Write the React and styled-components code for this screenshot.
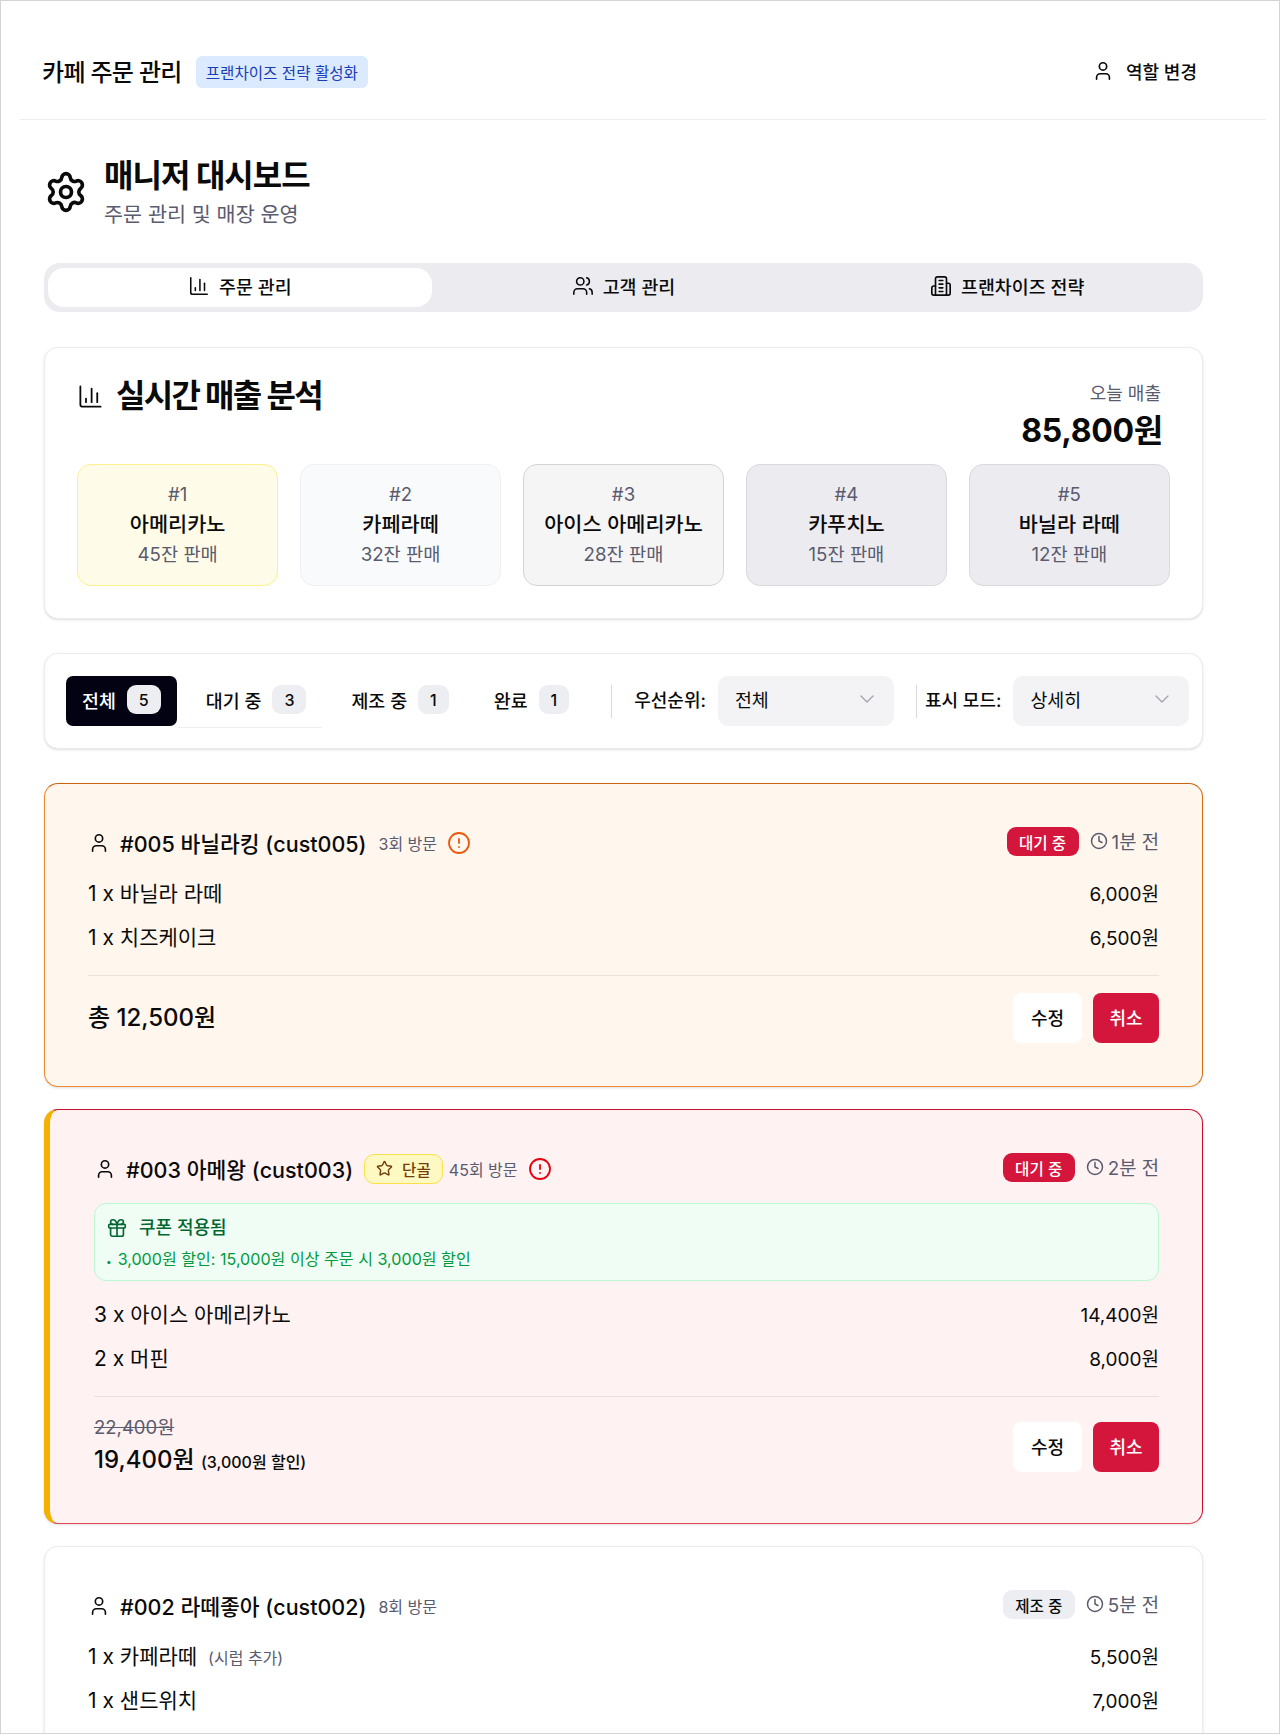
import styled, { createGlobalStyle } from 'styled-components';
import {
  AlertCircle,
  BarChart3,
  ChevronDown,
  Clock,
  Gift,
  Settings,
  Star,
  User,
  Users,
} from 'lucide-react';

const GlobalStyle = createGlobalStyle`
  * {
    box-sizing: border-box;
  }
  html, body {
    margin: 0;
    padding: 0;
    background: #fff;
  }
  body {
    font-family: Inter, "Noto Sans CJK KR", sans-serif;
    color: #0a0a0a;
  }
`;

const RANKS = [
  { rank: 1, name: '아메리카노', sold: '45잔 판매', bg: '#fefce8', line: '#fef08a' },
  { rank: 2, name: '카페라떼', sold: '32잔 판매', bg: '#f9fafb', line: '#eff0f3' },
  { rank: 3, name: '아이스 아메리카노', sold: '28잔 판매', bg: '#f5f5f5', line: '#d4d4d4' },
  { rank: 4, name: '카푸치노', sold: '15잔 판매', bg: '#ececf0', line: '#d9d9de' },
  { rank: 5, name: '바닐라 라떼', sold: '12잔 판매', bg: '#ececf0', line: '#d9d9de' },
];

const FILTERS = [
  { label: '전체', count: 5, active: true },
  { label: '대기 중', count: 3, underlined: true },
  { label: '제조 중', count: 1 },
  { label: '완료', count: 1 },
];

// tall tower with side wings, the packaged Building2 is drawn differently
function TowerIcon() {
  return (
    <svg
      width="22"
      height="22"
      viewBox="0 0 24 24"
      fill="none"
      stroke="currentColor"
      strokeWidth="1.8"
      strokeLinecap="round"
      strokeLinejoin="round"
    >
      <path d="M6 22V4a2 2 0 0 1 2-2h8a2 2 0 0 1 2 2v18Z" />
      <path d="M6 12H4a2 2 0 0 0-2 2v6a2 2 0 0 0 2 2h2" />
      <path d="M18 9h2a2 2 0 0 1 2 2v9a2 2 0 0 1-2 2h-2" />
      <path d="M10 6h4" />
      <path d="M10 10h4" />
      <path d="M10 14h4" />
      <path d="M10 18h4" />
    </svg>
  );
}

function OrderHead({ title, visits, alert, regular, status, waiting, ago }) {
  return (
    <OrderHeader>
      <HeadLeft>
        <User size={22} strokeWidth={1.8} />
        <OrderTitle>{title}</OrderTitle>
        {regular && (
          <RegularBadge>
            <Star size={17} strokeWidth={2} />
            단골
          </RegularBadge>
        )}
        <Visits $tight={regular}>{visits}</Visits>
        {alert && (
          <AlertMark $color={alert}>
            <AlertCircle size={24} strokeWidth={1.8} />
          </AlertMark>
        )}
      </HeadLeft>
      <HeadRight>
        <StatusBadge $waiting={waiting}>{status}</StatusBadge>
        <Ago>
          <Clock size={18} strokeWidth={2} />
          {ago}
        </Ago>
      </HeadRight>
    </OrderHeader>
  );
}

function ItemRow({ name, option, price }) {
  return (
    <Item>
      <ItemName>
        {name}
        {option && <ItemOption>{option}</ItemOption>}
      </ItemName>
      <ItemPrice>{price}</ItemPrice>
    </Item>
  );
}

function Actions() {
  return (
    <ActionRow>
      <EditButton>수정</EditButton>
      <CancelButton>취소</CancelButton>
    </ActionRow>
  );
}

export default function App() {
  return (
    <Frame>
      <GlobalStyle />
      <TopBar>
        <Brand>
          <BrandName>카페 주문 관리</BrandName>
          <BrandBadge>프랜차이즈 전략 활성화</BrandBadge>
        </Brand>
        <RoleButton>
          <User size={22} strokeWidth={1.8} />
          역할 변경
        </RoleButton>
      </TopBar>

      <Main>
        <PageHead>
          <GearIcon size={44} strokeWidth={2} />
          <div>
            <PageTitle>매니저 대시보드</PageTitle>
            <PageSub>주문 관리 및 매장 운영</PageSub>
          </div>
        </PageHead>

        <MainTabs>
          <MainTab $active>
            <BarChart3 size={22} strokeWidth={1.7} />
            주문 관리
          </MainTab>
          <MainTab>
            <Users size={22} strokeWidth={1.7} />
            고객 관리
          </MainTab>
          <MainTab>
            <TowerIcon />
            프랜차이즈 전략
          </MainTab>
        </MainTabs>

        <SalesCard>
          <SalesHead>
            <SalesTitle>
              <BarChart3 size={27} strokeWidth={1.6} />
              <h2>실시간 매출 분석</h2>
            </SalesTitle>
            <SalesTotal>
              <span>오늘 매출</span>
              <strong>85,800원</strong>
            </SalesTotal>
          </SalesHead>
          <RankGrid>
            {RANKS.map((r) => (
              <RankCard key={r.rank} $bg={r.bg} $line={r.line}>
                <RankNo>#{r.rank}</RankNo>
                <RankName>{r.name}</RankName>
                <RankSold>{r.sold}</RankSold>
              </RankCard>
            ))}
          </RankGrid>
        </SalesCard>

        <FilterCard>
          <FilterTabs>
            {FILTERS.map((f) => (
              <FilterTab key={f.label} $active={f.active} $underlined={f.underlined}>
                {f.label}
                <Count>{f.count}</Count>
              </FilterTab>
            ))}
          </FilterTabs>
          <Divider $left={26} />
          <FilterLabel $left={22}>우선순위:</FilterLabel>
          <SelectBox>
            전체
            <ChevronDown size={24} strokeWidth={1.4} />
          </SelectBox>
          <Divider $left={22} />
          <FilterLabel $left={8}>표시 모드:</FilterLabel>
          <SelectBox>
            상세히
            <ChevronDown size={24} strokeWidth={1.4} />
          </SelectBox>
        </FilterCard>

        <OrderList>
          <OrderCard $variant="orange">
            <OrderHead
              title="#005 바닐라킹 (cust005)"
              visits="3회 방문"
              alert="#ea580c"
              status="대기 중"
              waiting
              ago="1분 전"
            />
            <Items>
              <ItemRow name="1 x 바닐라 라떼" price="6,000원" />
              <ItemRow name="1 x 치즈케이크" price="6,500원" />
            </Items>
            <OrderFoot>
              <TotalPrice>총 12,500원</TotalPrice>
              <Actions />
            </OrderFoot>
          </OrderCard>

          <OrderCard $variant="red">
            <OrderHead
              title="#003 아메왕 (cust003)"
              visits="45회 방문"
              alert="#e7000b"
              regular
              status="대기 중"
              waiting
              ago="2분 전"
            />
            <Coupon>
              <CouponTitle>
                <Gift size={22} strokeWidth={1.8} />
                쿠폰 적용됨
              </CouponTitle>
              <CouponLine>
                <Dot>•</Dot>3,000원 할인: 15,000원 이상 주문 시 3,000원 할인
              </CouponLine>
            </Coupon>
            <Items $afterCoupon>
              <ItemRow name="3 x 아이스 아메리카노" price="14,400원" />
              <ItemRow name="2 x 머핀" price="8,000원" />
            </Items>
            <OrderFoot>
              <div>
                <OldPrice>22,400원</OldPrice>
                <DiscountPrice>
                  19,400원 <Saved>(3,000원 할인)</Saved>
                </DiscountPrice>
              </div>
              <Actions />
            </OrderFoot>
          </OrderCard>

          <OrderCard>
            <OrderHead
              title="#002 라떼좋아 (cust002)"
              visits="8회 방문"
              status="제조 중"
              ago="5분 전"
            />
            <Items>
              <ItemRow name="1 x 카페라떼" option="(시럽 추가)" price="5,500원" />
              <ItemRow name="1 x 샌드위치" price="7,000원" />
            </Items>
          </OrderCard>
        </OrderList>
      </Main>
    </Frame>
  );
}

const Frame = styled.div`
  width: 1280px;
  height: 1734px;
  overflow: hidden;
  border: 1px solid #d4d4d4;
`;

const TopBar = styled.header`
  display: flex;
  align-items: center;
  justify-content: space-between;
  height: 119px;
  margin: 0 13px 0 19px;
  padding: 24px 69px 0 22px;
  border-bottom: 1px solid #eeeeee;
`;

const Brand = styled.div`
  display: flex;
  align-items: center;
  gap: 14px;
`;

const BrandName = styled.h1`
  margin: 2px 0 0;
  font-size: 24px;
  font-weight: 500;
  letter-spacing: -0.7px;
  line-height: 32px;
`;

const BrandBadge = styled.span`
  display: flex;
  align-items: center;
  height: 32px;
  padding: 0 10px;
  border-radius: 6px;
  background: #dbeafe;
  color: #193cb8;
  font-size: 15.6px;
  font-weight: 400;
`;

const RoleButton = styled.div`
  display: flex;
  align-items: center;
  gap: 12px;
  padding-bottom: 2px;
  font-size: 18px;
  font-weight: 500;
`;

const Main = styled.main`
  display: flex;
  flex-direction: column;
  width: 1159px;
  margin-left: 43px;
`;

const PageHead = styled.div`
  display: flex;
  align-items: center;
  gap: 16px;
  height: 71px;
  margin-top: 38px;
`;

const GearIcon = styled(Settings)`
  margin-bottom: 4px;
`;

const PageTitle = styled.h2`
  margin: 0 0 7px;
  font-size: 32px;
  font-weight: 700;
  letter-spacing: -1px;
  line-height: 36px;
`;

const PageSub = styled.p`
  margin: 0;
  color: #5a5b6e;
  font-size: 20.7px;
  line-height: 28px;
`;

const MainTabs = styled.div`
  display: grid;
  grid-template-columns: repeat(3, 1fr);
  height: 49px;
  margin-top: 34px;
  padding: 5px 4px;
  border-radius: 16px;
  background: #ececf0;
`;

const MainTab = styled.div`
  display: flex;
  align-items: center;
  justify-content: center;
  gap: 9px;
  padding-bottom: 4px;
  border-radius: 16px;
  background: ${(p) => (p.$active ? '#fff' : 'transparent')};
  font-size: 18.4px;
  font-weight: 500;
`;

const Card = styled.section`
  border: 1px solid #ececec;
  border-radius: 14px;
  background: #fff;
  box-shadow: 0 1px 3px rgba(0, 0, 0, 0.1), 0 1px 2px -1px rgba(0, 0, 0, 0.1);
`;

const SalesCard = styled(Card)`
  height: 272px;
  margin-top: 35px;
  padding: 32px;
`;

const SalesHead = styled.div`
  display: flex;
  justify-content: space-between;
  height: 84px;
`;

const SalesTitle = styled.div`
  display: flex;
  align-items: center;
  gap: 12px;
  height: 32px;
  h2 {
    margin: 0;
    font-size: 32px;
    font-weight: 700;
    letter-spacing: -1.7px;
    line-height: 32px;
  }
`;

const SalesTotal = styled.div`
  display: flex;
  flex-direction: column;
  align-items: flex-end;
  padding-right: 7px;
  span {
    margin-right: 2px;
    color: #5a5b6e;
    font-size: 18px;
    line-height: 28px;
  }
  strong {
    margin-top: 3px;
    font-size: 32px;
    font-weight: 700;
    letter-spacing: -0.3px;
    line-height: 40px;
  }
`;

const RankGrid = styled.div`
  display: grid;
  grid-template-columns: repeat(5, 1fr);
  gap: 21.6px;
`;

const RankCard = styled.div`
  display: flex;
  flex-direction: column;
  align-items: center;
  height: 122px;
  padding-top: 15px;
  border: 1px solid ${(p) => p.$line};
  border-radius: 14px;
  background: ${(p) => p.$bg};
`;

const RankNo = styled.div`
  color: #5a5b6e;
  font-size: 18.6px;
  line-height: 28px;
`;

const RankName = styled.div`
  margin-top: 2px;
  font-size: 20.8px;
  font-weight: 500;
  line-height: 30px;
`;

const RankSold = styled.div`
  margin-top: 1px;
  color: #5a5b6e;
  font-size: 18.7px;
  line-height: 28px;
`;

const FilterCard = styled(Card)`
  display: flex;
  align-items: center;
  height: 96px;
  margin-top: 34px;
  padding-left: 21px;
`;

const FilterTabs = styled.div`
  display: flex;
  gap: 13px;
`;

const FilterTab = styled.div`
  position: relative;
  display: flex;
  align-items: center;
  gap: 11px;
  height: 50px;
  padding: 0 16px 3px;
  border-radius: 7px;
  background: ${(p) => (p.$active ? '#030213' : 'transparent')};
  color: ${(p) => (p.$active ? '#fff' : '#0a0a0a')};
  font-size: 18.4px;
  font-weight: 500;
  &::after {
    content: ${(p) => (p.$underlined ? '""' : 'none')};
    position: absolute;
    left: -13px;
    right: 0;
    bottom: -2px;
    height: 1px;
    background: #eeeeee;
  }
`;

const Count = styled.span`
  display: flex;
  align-items: center;
  justify-content: center;
  height: 29px;
  padding: 0 12px;
  border-radius: 9px;
  background: #eceef2;
  color: #0a0a0a;
  font-size: 16px;
  font-weight: 500;
`;

const Divider = styled.span`
  width: 1px;
  height: 33px;
  margin-left: ${(p) => p.$left}px;
  background: #d9d9d9;
`;

const FilterLabel = styled.span`
  margin: 0 12px 4px ${(p) => p.$left}px;
  font-size: 18px;
  font-weight: 500;
`;

const SelectBox = styled.div`
  display: flex;
  align-items: center;
  justify-content: space-between;
  width: 176px;
  height: 50px;
  padding: 0 15px 4px 17px;
  border-radius: 10px;
  background: #f3f3f5;
  font-size: 18.4px;
  svg {
    color: #a4a4ac;
  }
`;

const OrderList = styled.div`
  display: flex;
  flex-direction: column;
  gap: 22px;
  margin-top: 34px;
`;

const VARIANTS = {
  orange: `
    background: #fff6ed;
    border-color: #c9650f #d46d14 #ef8a32 #ef8a32;
  `,
  red: `
    background: #fef2f2;
    border-color: #c8102e #c8102e #e04a58 #f5b000;
    border-left-width: 6px;
    padding-left: 44px;
    padding-bottom: 44px;
  `,
};

const OrderCard = styled(Card)`
  padding: 43px;
  ${(p) => VARIANTS[p.$variant] || ''}
`;

const OrderHeader = styled.div`
  display: flex;
  align-items: center;
  justify-content: space-between;
  height: 29px;
`;

const HeadLeft = styled.div`
  display: flex;
  align-items: center;
  padding-top: 2px;
`;

const OrderTitle = styled.span`
  margin-left: 10px;
  font-size: 21.5px;
  font-weight: 500;
`;

const RegularBadge = styled.span`
  display: flex;
  align-items: center;
  gap: 9px;
  height: 30px;
  margin-left: 11px;
  padding: 0 11px;
  border: 1px solid #fde047;
  border-radius: 10px;
  background: #fef9c3;
  color: #733e0a;
  font-size: 15.6px;
  font-weight: 500;
`;

const Visits = styled.span`
  margin-left: ${(p) => (p.$tight ? 6 : 12)}px;
  color: #5a5b6e;
  font-size: 16px;
`;

const AlertMark = styled.span`
  display: flex;
  margin-left: 10px;
  color: ${(p) => p.$color};
`;

const HeadRight = styled.div`
  display: flex;
  align-items: center;
  gap: 11px;
`;

const StatusBadge = styled.span`
  display: flex;
  align-items: center;
  justify-content: center;
  width: 72px;
  height: 29px;
  border-radius: 9px;
  background: ${(p) => (p.$waiting ? '#d4163c' : '#eceef2')};
  color: ${(p) => (p.$waiting ? '#fff' : '#0a0a0a')};
  font-size: 15.6px;
  font-weight: 500;
`;

const Ago = styled.span`
  display: flex;
  align-items: center;
  gap: 4px;
  padding-bottom: 2px;
  color: #5a5b6e;
  font-size: 18.8px;
`;

const Coupon = styled.div`
  height: 78px;
  margin-top: 21px;
  padding: 11px 11px;
  border: 1px solid #bbf7d0;
  border-radius: 12px;
  background: #f0fdf4;
`;

const CouponTitle = styled.div`
  display: flex;
  align-items: center;
  gap: 11px;
  color: #016630;
  font-size: 18px;
  font-weight: 500;
  line-height: 26px;
`;

const CouponLine = styled.div`
  margin-top: 6px;
  color: #009a3c;
  font-size: 16.1px;
  line-height: 24px;
`;

const Dot = styled.span`
  margin-right: 6px;
  font-size: 10px;
`;

const Items = styled.div`
  display: flex;
  flex-direction: column;
  gap: 16px;
  margin: ${(p) => (p.$afterCoupon ? '18px 0 2px' : '22px 0 0')};
`;

const Item = styled.div`
  display: flex;
  align-items: center;
  justify-content: space-between;
  height: 28px;
`;

const ItemName = styled.span`
  font-size: 21px;
`;

const ItemOption = styled.span`
  margin-left: 11px;
  color: #5a5b6e;
  font-size: 16px;
`;

const ItemPrice = styled.span`
  font-size: 19px;
`;

const OrderFoot = styled.div`
  display: flex;
  align-items: center;
  justify-content: space-between;
  margin-top: 25px;
  padding-top: 17px;
  border-top: 1px solid rgba(0, 0, 0, 0.08);
`;

const OldPrice = styled.div`
  color: #5a5b6e;
  font-size: 18.5px;
  line-height: 26px;
  text-decoration: line-through;
`;

const TotalPrice = styled.div`
  padding-bottom: 2px;
  font-size: 24px;
  font-weight: 500;
  line-height: 39px;
`;

const DiscountPrice = styled(TotalPrice)`
  margin-top: 3px;
  padding-bottom: 0;
  line-height: 34px;
`;

const Saved = styled.span`
  font-size: 16px;
`;

const ActionRow = styled.div`
  display: flex;
  gap: 11px;
`;

const EditButton = styled.div`
  display: flex;
  align-items: center;
  justify-content: center;
  width: 69px;
  height: 50px;
  padding-bottom: 2px;
  border-radius: 8px;
  background: #fff;
  font-size: 18px;
  font-weight: 500;
`;

const CancelButton = styled(EditButton)`
  width: 66px;
  background: #d4163c;
  color: #fff;
`;
